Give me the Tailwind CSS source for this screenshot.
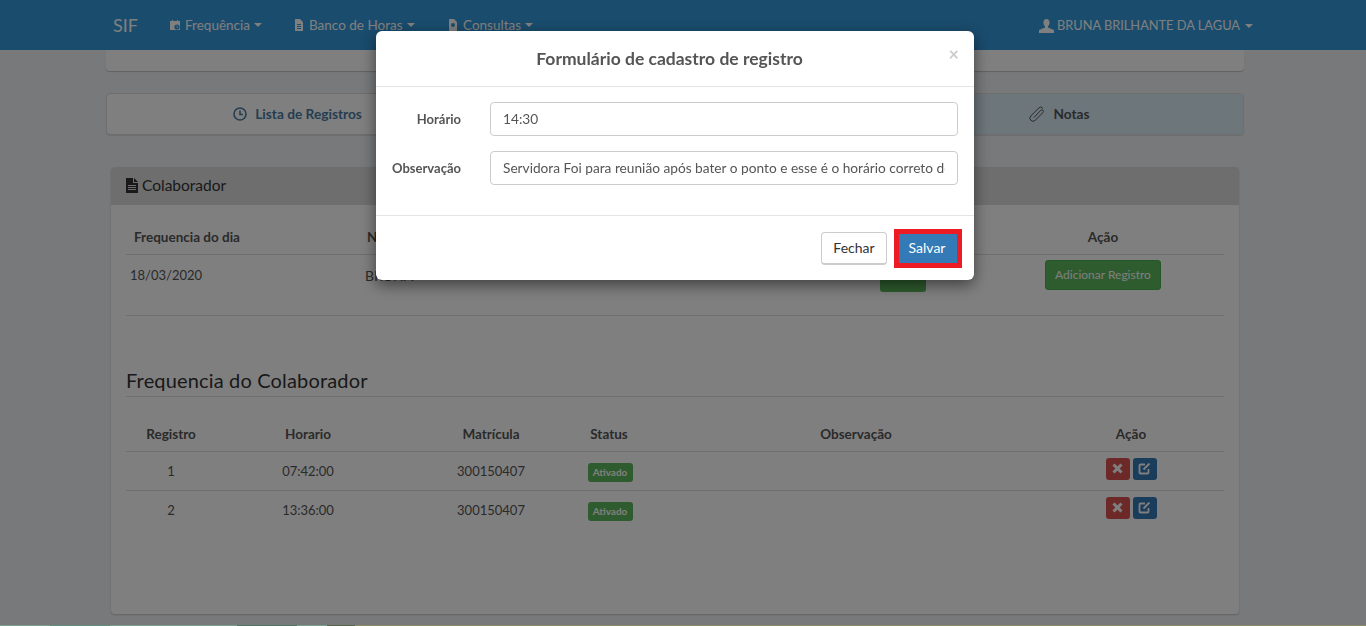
<!DOCTYPE html>
<html lang="pt-BR">
<head>
  <meta charset="UTF-8">
  <title>SIF - Frequência</title>
  <script src="https://cdn.jsdelivr.net/npm/@tailwindcss/browser@4"></script>
</head>
<body class="h-[626px] overflow-hidden bg-[#eff3f7] font-['Lato',sans-serif] text-[14px] text-[#555]">
  <!-- Navbar -->
  <nav class="h-[50px] bg-[#3498db] text-white flex items-center pl-[113px] pr-[113px] text-[13.5px]">
    <span class="text-[18px] w-[56px]">SIF</span>
    <a class="flex items-center gap-1 w-[124px]">
      <svg class="w-3 h-3" viewBox="0 0 12 12" fill="currentColor"><path d="M1 2h2V1h1v1h4V1h1v1h2v9H1z"/><circle cx="8" cy="8" r="2.6" fill="#3498db"/><path d="M7.7 6.5h.7v1.4l1 .6-.3.5-1.4-.8z"/></svg>
      Frequência<i class="w-0 h-0 border-x-4 border-x-transparent border-t-4 border-t-current"></i>
    </a>
    <a class="flex items-center gap-1 w-[154px]">
      <svg class="w-3 h-3" viewBox="0 0 12 12" fill="currentColor"><path d="M2 0h5l3 3v9H2zM4 5v1h4V5zm0 2v1h4V7zm0 2v1h4V9z" fill-rule="evenodd"/></svg>
      Banco de Horas <i class="w-0 h-0 border-x-4 border-x-transparent border-t-4 border-t-current"></i>
    </a>
    <a class="flex items-center gap-1">
      <svg class="w-3 h-3" viewBox="0 0 12 12" fill="currentColor"><path d="M2 0h5l3 3v9H2zM6 4a2 2 0 100 4 2 2 0 000-4z" fill-rule="evenodd"/></svg>
      Consultas <i class="w-0 h-0 border-x-4 border-x-transparent border-t-4 border-t-current"></i>
    </a>
    <a class="ml-auto pt-[2px] flex items-center gap-[3px] text-[12.8px]">
      <svg class="w-[15px] h-[15px]" viewBox="0 0 15 15" fill="currentColor"><path d="M7.5 0C5.5 0 4.4 1.6 4.4 3.6c0 1.5.7 3 1.6 3.7v1.3L0 11v3h15v-3L9 8.6V7.3c.9-.7 1.6-2.2 1.6-3.700C10.600 1.600 9.500 0 7.500 0z"/></svg>
      BRUNA BRILHANTE DA LAGUA <i class="ml-[2px] w-0 h-0 border-x-4 border-x-transparent border-t-4 border-t-current"></i>
    </a>
  </nav>

  <div class="w-[1138px] ml-[106px]">
    <div class="h-[21px] bg-white rounded-b shadow-[0_1px_1px_rgba(0,0,0,0.2)]"></div>

    <!-- Tabs -->
    <div class="mt-[22px] h-[42px] grid grid-cols-[381px_1fr_367px] border border-[#ddd] rounded bg-white shadow-[0_1px_1px_rgba(0,0,0,0.1)] font-bold text-[13.7px] text-[#4a7ba3]">
      <div class="flex items-center justify-center gap-2">
        <svg class="w-[14px] h-[14px]" viewBox="0 0 14 14" fill="none" stroke="currentColor" stroke-width="1.6"><circle cx="7" cy="7" r="6"/><path d="M7 3.5V7.5H10"/></svg>
        Lista de Registros
      </div>
      <div></div>
      <div class="flex items-center justify-center gap-2 bg-[#d9edf7] text-[#555]">
        <svg class="w-[16px] h-[16px]" viewBox="0 0 16 16" fill="none" stroke="currentColor" stroke-width="1"><path d="M5 11.5L11.8 4.3a1.5 1.5 0 012.2 2.2L6.2 14.3a3 3 0 01-4.4-4.3L9.5 2.2a3 3 0 014.4 0"/></svg>
        Notas
      </div>
    </div>

    <!-- Colaborador -->
    <section class="mt-[32px] mx-[5px] w-[1128px] h-[447px] bg-white rounded shadow-[0_1px_2px_rgba(0,0,0,0.2)]">
      <h3 class="h-[38px] pb-[1px] bg-[#ddd] rounded-t flex items-center gap-1 pl-[15px] text-[15.5px] text-[#333]">
        <svg class="w-[12px] h-[15px]" viewBox="0 0 12 15" fill="currentColor"><path d="M0 0h7v5h5v10H0zM8 0l4 4H8zM2 7v1h8V7zm0 2v1h8V9zm0 2v1h8v-1z" fill-rule="evenodd"/></svg>
        Colaborador
      </h3>
      <div class="px-[15px]">
        <div class="grid grid-cols-[239px_515px_102px_242px] mt-[14px] h-[36px] pt-[2px] items-center border-b border-[#ddd] font-bold text-[13.5px]">
          <span class="pl-[8px]">Frequencia do dia</span><span class="pl-[2px]">Nome</span><span></span><span class="text-center">Ação</span>
        </div>
        <div class="grid grid-cols-[239px_515px_102px_242px] h-[40px] items-center">
          <span class="pl-[4px] pt-[1px] text-[13px]">18/03/2020</span><span class="pt-[1px]">BRUNA</span>
          <span class="block w-[46px] h-[21px] mt-[12px] rounded-[3px] bg-[#5cb85c]"></span>
          <span class="flex justify-center"><button class="h-[30px] w-[116px] rounded-[3px] bg-[#5cb85c] border border-[#4cae4c] text-white text-[12px]">Adicionar Registro</button></span>
        </div>
        <hr class="mt-[20px] border-[#ddd]">
        <h2 class="mt-[53px] h-[28px] text-[20px] leading-[22px] tracking-[0.16px] text-[#333] border-b border-[#ddd]">Frequencia do Colaborador</h2>
        <table class="mt-[19px] w-full text-center table-fixed">
          <thead>
            <tr class="h-[35px] border-b border-[#ddd] font-bold text-[13.5px]">
              <th class="w-[90px] pt-[2px]">Registro</th><th class="w-[184px] pt-[2px]">Horario</th><th class="w-[182px] pt-[2px]">Matrícula</th><th class="w-[54px] pt-[2px]">Status</th><th class="w-[440px] pt-[2px]">Observação</th><th class="w-[110px] pt-[2px]">Ação</th><th></th>
            </tr>
          </thead>
          <tbody class="text-[13px]">
            <tr class="h-[39px] border-b border-[#ddd]">
              <td class="pt-[2px]">1</td><td class="pt-[2px]">07:42:00</td><td class="pt-[2px]">300150407</td>
              <td><span class="inline-block ml-[2px] w-[45px] h-[19px] leading-[19px] align-[-2px] rounded-[3px] bg-[#5cb85c] text-white text-[10px] font-bold">Ativado</span></td><td></td>
              <td><div class="flex justify-center gap-[3px] mb-[4px]">
                <button class="w-[24px] h-[22px] rounded-[3px] bg-[#d9534f] text-white flex items-center justify-center"><svg class="w-[11px] h-[11px]" viewBox="0 0 11 11" stroke="currentColor" stroke-width="3"><path d="M1.5 1.5l8 8M9.5 1.5l-8 8"/></svg></button>
                <button class="w-[24px] h-[22px] rounded-[3px] bg-[#337ab7] text-white flex items-center justify-center"><svg class="w-[13px] h-[13px]" viewBox="0 0 13 13" fill="none" stroke="currentColor" stroke-width="1.8"><path d="M7 2.5H2.5a1 1 0 00-1 1v7a1 1 0 001 1h7a1 1 0 001-1V7M5.5 7.5L11.5 1.5"/></svg></button>
              </div></td><td></td>
            </tr>
            <tr class="h-[39px]">
              <td class="pt-[2px]">2</td><td class="pt-[2px]">13:36:00</td><td class="pt-[2px]">300150407</td>
              <td><span class="inline-block ml-[2px] w-[45px] h-[19px] leading-[19px] align-[-2px] rounded-[3px] bg-[#5cb85c] text-white text-[10px] font-bold">Ativado</span></td><td></td>
              <td><div class="flex justify-center gap-[3px] mb-[4px]">
                <button class="w-[24px] h-[22px] rounded-[3px] bg-[#d9534f] text-white flex items-center justify-center"><svg class="w-[11px] h-[11px]" viewBox="0 0 11 11" stroke="currentColor" stroke-width="3"><path d="M1.5 1.5l8 8M9.5 1.5l-8 8"/></svg></button>
                <button class="w-[24px] h-[22px] rounded-[3px] bg-[#337ab7] text-white flex items-center justify-center"><svg class="w-[13px] h-[13px]" viewBox="0 0 13 13" fill="none" stroke="currentColor" stroke-width="1.8"><path d="M7 2.5H2.5a1 1 0 00-1 1v7a1 1 0 001 1h7a1 1 0 001-1V7M5.5 7.5L11.5 1.5"/></svg></button>
              </div></td><td></td>
            </tr>
          </tbody>
        </table>
      </div>
    </section>
  </div>

  <!-- Backdrop -->
  <div class="fixed inset-0 bg-black/50"></div>

  <!-- strip of the desktop left in the capture -->
  <div class="fixed bottom-0 inset-x-0 h-px flex">
    <div class="w-[50px] bg-[#76a08c]"></div>
    <div class="w-[60px] bg-[#5f8f7e]"></div>
    <div class="w-[127px] bg-[#76a08c]"></div>
    <div class="w-[60px] bg-[#4f7565]"></div>
    <div class="w-[30px] bg-[#76a08c]"></div>
    <div class="w-[28px] bg-[#5a6548]"></div>
    <div class="flex-1 bg-[#8a8f63]"></div>
  </div>

  <!-- Modal -->
  <div class="fixed left-[376px] top-[31px] w-[598px] h-[249px] bg-white rounded-md shadow-[0_5px_15px_rgba(0,0,0,0.5)]">
    <div class="relative h-[56px] pt-[1px] pr-[11px] border-b border-[#e5e5e5] flex items-center justify-center">
      <h4 class="text-[17.5px] font-bold text-[#555]">Formulário de cadastro de registro</h4>
      <span class="absolute right-[15px] top-[14px] text-[18px] font-bold text-[#ccc] leading-none">×</span>
    </div>
    <div class="h-[129px] border-b border-[#e5e5e5] px-[15px] pt-[15px] flex flex-col gap-[15px]">
      <div class="flex items-center">
        <label class="w-[70px] pt-[2px] text-right font-bold text-[13px]">Horário</label>
        <input class="ml-[29px] w-[468px] h-[34px] px-[12px] pb-[2px] border border-[#ccc] rounded text-[13.7px] text-[#555]" value="14:30">
      </div>
      <div class="flex items-center">
        <label class="w-[70px] pt-[2px] text-right font-bold text-[13px]">Observação</label>
        <input class="ml-[29px] w-[468px] h-[34px] px-[12px] pb-[2px] border border-[#ccc] rounded text-[13.7px] text-[#555]" value="Servidora Foi para reunião após bater o ponto e esse é o horário correto de saída">
      </div>
    </div>
    <div class="flex justify-end items-center gap-[7px] pr-[12px] h-[64px]">
      <button class="w-[66px] h-[33px] border border-[#ccc] border-b-2 rounded-[4px] bg-white text-[#333]">Fechar</button>
      <button class="w-[68px] h-[39px] pb-[2px] pr-[2px] border-[5px] border-[#ed1c24] bg-[#337ab7] text-white">Salvar</button>
    </div>
  </div>
</body>
</html>
